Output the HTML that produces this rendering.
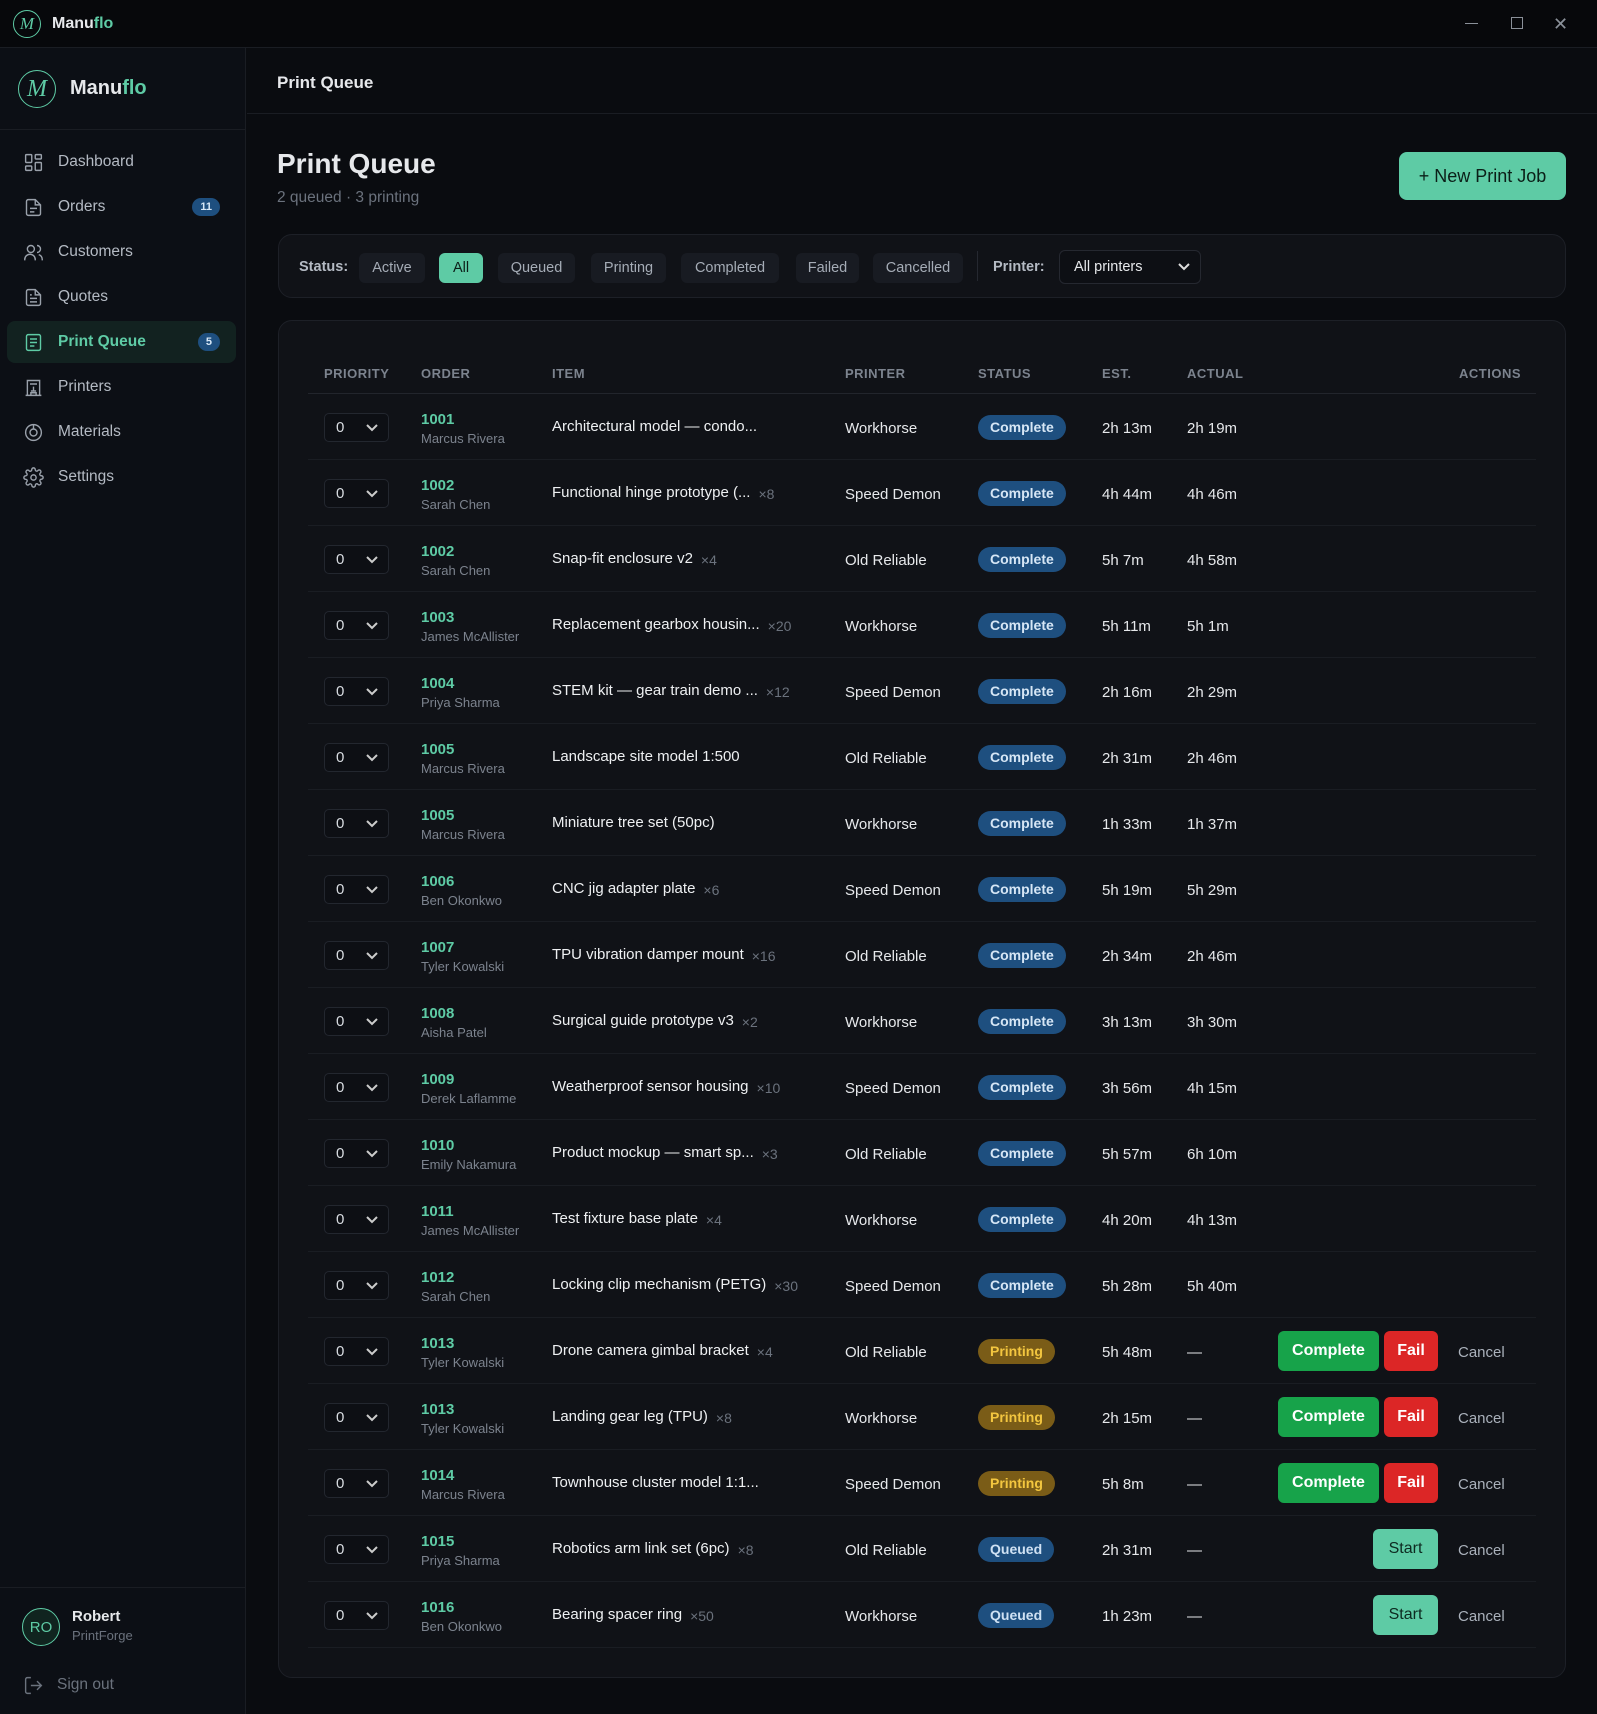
<!DOCTYPE html>
<html><head><meta charset="utf-8">
<style>
*{box-sizing:border-box;margin:0;padding:0}
body{width:1597px;height:1714px;background:#0a0c10;font-family:"Liberation Sans",sans-serif;color:#e6e8eb;position:relative;overflow:hidden;font-size:15px}
.tb{position:absolute;left:0;top:0;width:1597px;height:48px;background:#07080b;border-bottom:1px solid #1a1d23}
.sb{position:absolute;left:0;top:48px;width:246px;height:1666px;background:#0c0f15;border-right:1px solid #1a1d23}
.main{position:absolute;left:247px;top:48px;right:0;bottom:0;background:#0a0c10}
.logo{position:absolute;border:1.5px solid #5ecba5;border-radius:50%;color:#5ecba5;font-family:"Liberation Serif",serif;font-style:italic;display:flex;align-items:center;justify-content:center}
.nav{position:absolute;left:7px;width:229px;height:42px;display:flex;align-items:center;padding-left:16px;color:#b4bac3;font-size:15.5px;border-radius:8px}
.nav svg{width:21px;height:21px;margin-right:14px;stroke:#9aa1ab;fill:none;stroke-width:1.6}
.nav.act{background:#122220;color:#5ecba5;font-weight:bold}
.nav.act svg{stroke:#5ecba5}
.bdg{position:absolute;right:16px;background:#1e4f7f;color:#d8e8f7;font-size:11px;font-weight:bold;border-radius:10px;padding:3px 8px}
.card{position:absolute;left:278px;width:1288px;background:#101217;border:1px solid #1d2027;border-radius:14px}
.pill{position:absolute;top:18px;height:30px;background:#181b22;color:#a5acb6;border-radius:6px;font-size:14.5px;display:flex;align-items:center;justify-content:center}
.th{position:absolute;top:45px;font-size:13px;color:#7c838e;letter-spacing:.5px;font-weight:bold}
.row{position:absolute;left:29px;width:1228px;height:66px;border-bottom:1px solid #1a1d23}
.row>*{position:absolute}
.sel{left:16px;top:19px;width:65px;height:29px;border:1px solid #23272f;border-radius:5px;background:#0d0f14;font-size:15px;color:#d8dce1;padding:5px 0 0 11px}
.sel svg{position:absolute;right:10px;top:10px}
.on{left:113px;top:17px;color:#5ecba5;font-weight:bold;font-size:15px}
.cn{left:113px;top:37px;color:#7c838e;font-size:13px}
.it{left:244px;top:24px;font-size:15px;color:#eef0f2;white-space:nowrap}
.q{color:#6b727d;font-size:14px;margin-left:8px;position:relative;top:2px}
.pr{left:537px;top:26px;font-size:15px}
.st{left:670px;top:21px;height:25px;border-radius:13px;font-size:14px;font-weight:bold;padding:4px 12px 0}
.c{background:#1e4f7f;color:#d6e6f5}
.p{background:#7a5c17;color:#f3c63f}
.qd{background:#1e4f7f;color:#cfe1f3}
.e{left:794px;top:26px}
.a{left:879px;top:26px}
.btn{top:13px;height:40px;border-radius:6px;font-weight:bold;font-size:16px;display:flex;align-items:center;justify-content:center}
.bc{left:970px;width:101px;background:#17a34a;color:#fff}
.bf{left:1076px;width:54px;background:#dc2626;color:#fff}
.bs{left:1065px;width:65px;background:#5ecba5;color:#0d2a20;font-weight:normal}
.cx{left:1150px;top:26px;color:#aab1bb}
</style></head><body>
<div class="tb">
 <div class="logo" style="left:13px;top:10px;width:28px;height:28px;font-size:17px">M</div>
 <div style="position:absolute;left:52px;top:15px;font-weight:bold;font-size:16px">Manu<span style="color:#5ecba5">flo</span></div>
 <div style="position:absolute;left:1465px;top:23px;width:13px;height:1px;background:#8a9099"></div>
 <div style="position:absolute;left:1511px;top:17px;width:12px;height:12px;border:1px solid #8a9099"></div>
 <div style="position:absolute;left:1553px;top:14px;color:#8a9099;font-size:18px">✕</div>
</div>
<div class="sb">
 <div class="logo" style="left:18px;top:22px;width:38px;height:38px;font-size:24px">M</div>
 <div style="position:absolute;left:70px;top:29px;font-weight:bold;font-size:20px">Manu<span style="color:#5ecba5">flo</span></div>
 <div style="position:absolute;left:0;top:81px;width:246px;height:1px;background:#1a1d23"></div>
 <div class="nav" style="top:93px"><svg viewBox="0 0 24 24"><rect x="3" y="3" width="7" height="9" rx="1"/><rect x="14" y="3" width="7" height="5" rx="1"/><rect x="14" y="12" width="7" height="9" rx="1"/><rect x="3" y="16" width="7" height="5" rx="1"/></svg>Dashboard</div>
 <div class="nav" style="top:138px"><svg viewBox="0 0 24 24"><path d="M14 3H6a2 2 0 0 0-2 2v14a2 2 0 0 0 2 2h12a2 2 0 0 0 2-2V9z"/><path d="M14 3v6h6M8 13h8M8 17h5"/></svg>Orders<span class="bdg">11</span></div>
 <div class="nav" style="top:183px"><svg viewBox="0 0 24 24"><circle cx="9" cy="8" r="4"/><path d="M2 21v-1a6 6 0 0 1 12 0v1M16 4a4 4 0 0 1 0 8M22 21v-1a6 6 0 0 0-4-5.6"/></svg>Customers</div>
 <div class="nav" style="top:228px"><svg viewBox="0 0 24 24"><path d="M14 3H6a2 2 0 0 0-2 2v14a2 2 0 0 0 2 2h12a2 2 0 0 0 2-2V9z"/><path d="M14 3v6h6M8 13h8M8 17h8M8 9h2"/></svg>Quotes</div>
 <div class="nav act" style="top:273px"><svg viewBox="0 0 24 24"><rect x="4" y="3" width="16" height="18" rx="2"/><path d="M8 8h8M8 12h8M8 16h5"/></svg>Print Queue<span class="bdg">5</span></div>
 <div class="nav" style="top:318px"><svg viewBox="0 0 24 24"><path d="M5 21V4h14v17M3 21h18M8 8h8M12 11v5M9 16h6M9 21v-3h6v3"/></svg>Printers</div>
 <div class="nav" style="top:363px"><svg viewBox="0 0 24 24"><circle cx="12" cy="12" r="9"/><circle cx="12" cy="12" r="4"/><path d="M12 3v5"/></svg>Materials</div>
 <div class="nav" style="top:408px"><svg viewBox="0 0 24 24"><circle cx="12" cy="12" r="3"/><path d="M19.4 15a1.7 1.7 0 0 0 .3 1.8l.1.1a2 2 0 1 1-2.8 2.8l-.1-.1a1.7 1.7 0 0 0-1.8-.3 1.7 1.7 0 0 0-1 1.5V21a2 2 0 1 1-4 0v-.1a1.7 1.7 0 0 0-1.1-1.5 1.7 1.7 0 0 0-1.8.3l-.1.1a2 2 0 1 1-2.8-2.8l.1-.1a1.7 1.7 0 0 0 .3-1.8 1.7 1.7 0 0 0-1.500-1H3a2 2 0 1 1 0-4h.1a1.7 1.7 0 0 0 1.5-1.1 1.7 1.7 0 0 0-.3-1.8l-.1-.1a2 2 0 1 1 2.8-2.8l.1.1a1.7 1.7 0 0 0 1.8.3H9a1.7 1.7 0 0 0 1-1.5V3a2 2 0 1 1 4 0v.1a1.7 1.7 0 0 0 1 1.5 1.7 1.7 0 0 0 1.8-.3l.1-.1a2 2 0 1 1 2.8 2.8l-.1.1a1.7 1.7 0 0 0-.3 1.8V9a1.7 1.7 0 0 0 1.5 1H21a2 2 0 1 1 0 4h-.1a1.7 1.7 0 0 0-1.5 1z"/></svg>Settings</div>
 <div style="position:absolute;left:0;top:1539px;width:246px;height:1px;background:#1a1d23"></div>
 <div style="position:absolute;left:22px;top:1560px;width:38px;height:38px;border:1.5px solid #5ecba5;border-radius:50%;background:#10241f;color:#5ecba5;font-size:15px;display:flex;align-items:center;justify-content:center">RO</div>
 <div style="position:absolute;left:72px;top:1560px;font-weight:bold;font-size:15px">Robert</div>
 <div style="position:absolute;left:72px;top:1580px;font-size:13px;color:#6b727d">PrintForge</div>
 <svg style="position:absolute;left:23px;top:1627px" width="21" height="21" viewBox="0 0 24 24" fill="none" stroke="#6b727d" stroke-width="1.6"><path d="M9 21H5a2 2 0 0 1-2-2V5a2 2 0 0 1 2-2h4M16 17l5-5-5-5M21 12H9"/></svg>
 <div style="position:absolute;left:57px;top:1628px;font-size:15.5px;color:#6b727d">Sign out</div>
</div>
<div class="main">
 <div style="position:absolute;left:30px;top:25px;font-weight:bold;font-size:17px">Print Queue</div>
 <div style="position:absolute;left:0;top:65px;right:0;height:1px;background:#1a1d23"></div>
</div>
<div style="position:absolute;left:277px;top:148px;font-weight:bold;font-size:28px">Print Queue</div>
<div style="position:absolute;left:277px;top:189px;font-size:15.5px;color:#6b727d">2 queued · 3 printing</div>
<div style="position:absolute;left:1399px;top:152px;width:167px;height:48px;background:#5ecba5;border-radius:8px;color:#0b1f18;font-size:18px;display:flex;align-items:center;justify-content:center">+ New Print Job</div>
<div class="card" style="top:234px;height:64px">
 <div style="position:absolute;left:20px;top:24px;font-size:14.5px;font-weight:bold;color:#b4bac3">Status:</div>
 <div class="pill" style="left:80px;width:66px">Active</div>
 <div class="pill" style="left:160px;width:44px;background:#5ecba5;color:#0b1f18">All</div>
 <div class="pill" style="left:219px;width:77px">Queued</div>
 <div class="pill" style="left:312px;width:75px">Printing</div>
 <div class="pill" style="left:402px;width:98px">Completed</div>
 <div class="pill" style="left:517px;width:63px">Failed</div>
 <div class="pill" style="left:594px;width:90px">Cancelled</div>
 <div style="position:absolute;left:698px;top:16px;width:1px;height:30px;background:#252830"></div>
 <div style="position:absolute;left:714px;top:24px;font-size:14.5px;font-weight:bold;color:#b4bac3">Printer:</div>
 <div style="position:absolute;left:780px;top:15px;width:142px;height:34px;border:1px solid #252830;border-radius:6px;background:#0d0f14;font-size:14.5px;padding:8px 0 0 14px">All printers<svg style="position:absolute;right:10px;top:12px" width="12" height="8" viewBox="0 0 12 8" fill="none" stroke="#ddd" stroke-width="2"><path d="M1 1l5 5 5-5"/></svg></div>
</div>
<div class="card" style="top:320px;height:1358px">
 <div class="th" style="left:45px">PRIORITY</div>
 <div class="th" style="left:142px">ORDER</div>
 <div class="th" style="left:273px">ITEM</div>
 <div class="th" style="left:566px">PRINTER</div>
 <div class="th" style="left:699px">STATUS</div>
 <div class="th" style="left:823px">EST.</div>
 <div class="th" style="left:908px">ACTUAL</div>
 <div class="th" style="left:1180px">ACTIONS</div>
 <div style="position:absolute;left:29px;top:72px;width:1228px;height:1px;background:#22252c"></div>
 <div id="rows"></div>
</div>
<script>
const R=[
["1001","Marcus Rivera","Architectural model — condo...","","Workhorse","c","2h 13m","2h 19m"],
["1002","Sarah Chen","Functional hinge prototype (...","×8","Speed Demon","c","4h 44m","4h 46m"],
["1002","Sarah Chen","Snap-fit enclosure v2","×4","Old Reliable","c","5h 7m","4h 58m"],
["1003","James McAllister","Replacement gearbox housin...","×20","Workhorse","c","5h 11m","5h 1m"],
["1004","Priya Sharma","STEM kit — gear train demo ...","×12","Speed Demon","c","2h 16m","2h 29m"],
["1005","Marcus Rivera","Landscape site model 1:500","","Old Reliable","c","2h 31m","2h 46m"],
["1005","Marcus Rivera","Miniature tree set (50pc)","","Workhorse","c","1h 33m","1h 37m"],
["1006","Ben Okonkwo","CNC jig adapter plate","×6","Speed Demon","c","5h 19m","5h 29m"],
["1007","Tyler Kowalski","TPU vibration damper mount","×16","Old Reliable","c","2h 34m","2h 46m"],
["1008","Aisha Patel","Surgical guide prototype v3","×2","Workhorse","c","3h 13m","3h 30m"],
["1009","Derek Laflamme","Weatherproof sensor housing","×10","Speed Demon","c","3h 56m","4h 15m"],
["1010","Emily Nakamura","Product mockup — smart sp...","×3","Old Reliable","c","5h 57m","6h 10m"],
["1011","James McAllister","Test fixture base plate","×4","Workhorse","c","4h 20m","4h 13m"],
["1012","Sarah Chen","Locking clip mechanism (PETG)","×30","Speed Demon","c","5h 28m","5h 40m"],
["1013","Tyler Kowalski","Drone camera gimbal bracket","×4","Old Reliable","p","5h 48m","—"],
["1013","Tyler Kowalski","Landing gear leg (TPU)","×8","Workhorse","p","2h 15m","—"],
["1014","Marcus Rivera","Townhouse cluster model 1:1...","","Speed Demon","p","5h 8m","—"],
["1015","Priya Sharma","Robotics arm link set (6pc)","×8","Old Reliable","qd","2h 31m","—"],
["1016","Ben Okonkwo","Bearing spacer ring","×50","Workhorse","qd","1h 23m","—"]];
let h="";R.forEach((r,i)=>{const lbl={c:"Complete",p:"Printing",qd:"Queued"}[r[5]];
let act="";if(r[5]=="p")act='<div class="btn bc">Complete</div><div class="btn bf">Fail</div><div class="cx">Cancel</div>';
if(r[5]=="qd")act='<div class="btn bs">Start</div><div class="cx">Cancel</div>';
h+=`<div class="row" style="top:${73+i*66}px"><div class="sel">0<svg width="12" height="8" viewBox="0 0 12 8" fill="none" stroke="#ccc" stroke-width="2"><path d="M1 1l5 5 5-5"/></svg></div><div class="on">${r[0]}</div><div class="cn">${r[1]}</div><div class="it">${r[2]}${r[3]?'<span class="q">'+r[3]+'</span>':''}</div><div class="pr">${r[4]}</div><div class="st ${r[5]}">${lbl}</div><div class="e">${r[6]}</div><div class="a">${r[7]}</div>${act}</div>`});
document.getElementById("rows").innerHTML=h;
</script>
</body></html>
